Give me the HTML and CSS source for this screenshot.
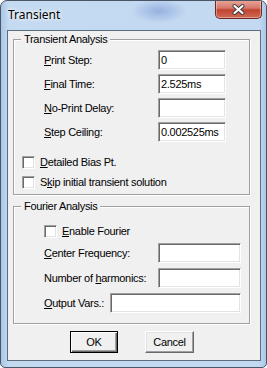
FILE: index.html
```html
<!DOCTYPE html>
<html lang="en">

<head>
	<meta charset="UTF-8">
	<title>Transient</title>
	<link rel="stylesheet" href="styles.css">
</head>

<body>
	<div class="window">
		<div class="titlebar">
			<span class="title">Transient</span>
			<button class="close" type="button">
				<svg width="13" height="11" viewBox="0 0 13 11">
					<path d="M2.5 2L10.5 9M10.5 2L2.5 9" stroke="#3a3a3a" stroke-width="4" stroke-linecap="round" />
					<path d="M2.5 2L10.5 9M10.5 2L2.5 9" stroke="#fff" stroke-width="2.2" stroke-linecap="round" />
				</svg>
			</button>
		</div>
		<div class="client">
			<fieldset class="group group-transient">
				<legend>Transient Analysis</legend>
				<div class="rows">
					<div class="field"><label><u>P</u>rint Step:</label><input class="edit" value="0"></div>
					<div class="field"><label><u>F</u>inal Time:</label><input class="edit" value="2.525ms"></div>
					<div class="field"><label><u>N</u>o-Print Delay:</label><input class="edit" value=""></div>
					<div class="field"><label><u>S</u>tep Ceiling:</label><input class="edit" value="0.002525ms"></div>
				</div>
				<div class="checks">
					<label class="check"><span class="box"></span><span><u>D</u>etailed Bias Pt.</span></label>
					<label class="check"><span class="box"></span><span>S<u>k</u>ip initial transient solution</span></label>
				</div>
			</fieldset>
			<fieldset class="group group-fourier">
				<legend>Fourier Analysis</legend>
				<div class="rows">
					<label class="check check-inset"><span class="box"></span><span><u>E</u>nable Fourier</span></label>
					<div class="field field-wide"><label><u>C</u>enter Frequency:</label><input class="edit" value=""></div>
					<div class="field field-wide"><label>Number of <u>h</u>armonics:</label><input class="edit" value=""></div>
					<div class="field field-vars"><label><u>O</u>utput Vars.:</label><input class="edit" value=""></div>
				</div>
			</fieldset>
			<div class="buttons">
				<button class="btn btn-default" type="button">OK</button>
				<button class="btn" type="button">Cancel</button>
			</div>
		</div>
	</div>
</body>

</html>
```

FILE: styles.css
```css
* {
	margin: 0;
	padding: 0;
	box-sizing: border-box;
}

body {
	background: #fff;
	font-family: "Liberation Sans", Arial, sans-serif;
	font-size: 11px;
	letter-spacing: -0.3px;
	color: #000;
}

.window {
	width: 267px;
	height: 368px;
	display: flex;
	flex-direction: column;
	border: 1px solid #4a5666;
	border-radius: 7px 7px 5px 5px;
	background:
		radial-gradient(ellipse 28px 12px at 158px 10px, rgba(70, 100, 190, 0.35), rgba(70, 100, 190, 0)),
		linear-gradient(to right, #a9c7e8, #c4daf1 8px, #c2d9f1 258px, #a9c7e8);
	overflow: hidden;
}

.titlebar {
	height: 29px;
	display: flex;
	align-items: flex-start;
	padding-left: 7px;
}

.title {
	margin-top: 6px;
	font-family: "Noto Sans", "Open Sans", sans-serif;
	font-size: 12px;
	line-height: 16px;
	letter-spacing: 0;
	text-shadow: 0 0 6px #fff, 0 0 3px #fff;
}

.close {
	margin-left: auto;
	margin-right: 4px;
	margin-top: -1px;
	width: 47px;
	height: 19px;
	display: flex;
	align-items: center;
	justify-content: center;
	border: 1px solid #6b2a22;
	border-top: 0;
	border-radius: 0 0 5px 5px;
	background: linear-gradient(to bottom, #e9a99c, #d5786a 45%, #c0432f 55%, #cf6b56);
	box-shadow: inset 0 0 0 1px rgba(255, 220, 210, 0.45);
}

.client {
	flex: 1;
	margin: 0 5px 6px 6px;
	border: 1px solid #5d6d80;
	background: #f0f0f0;
	display: flex;
	flex-direction: column;
}

.group {
	margin: 2px 10px 0 5px;
	border: 1px solid #a0a0a0;
	box-shadow: inset 1px 1px 0 #fff, 1px 1px 0 #fff;
	min-width: 0;
}

.group legend {
	margin-left: 7px;
	padding: 0 3px;
	line-height: 13px;
	background: #f0f0f0;
}

.group-fourier {
	margin-top: 5px;
}

.rows {
	display: flex;
	flex-direction: column;
	gap: 4px;
	padding-top: 4px;
}

.field {
	display: grid;
	grid-template-columns: 114px 68px;
	align-items: center;
	height: 20px;
	padding-left: 30px;
}

.field-wide {
	grid-template-columns: 114px 83px;
}

.field-vars {
	grid-template-columns: 66px 131px;
}

.edit {
	height: 20px;
	width: 100%;
	padding: 0 2px;
	font: inherit;
	letter-spacing: inherit;
	color: #000;
	background: #fff;
	border: 1px solid;
	border-color: #a0a0a0 #fff #fff #a0a0a0;
	box-shadow: inset 1px 1px 0 #696969, inset -1px -1px 0 #e3e3e3;
	outline: none;
}

.checks {
	display: flex;
	flex-direction: column;
	padding: 10px 0 2px 8px;
}

.check {
	display: flex;
	align-items: center;
	gap: 5px;
	height: 20px;
}

.check-inset {
	padding-left: 30px;
	margin-top: 4px;
	margin-bottom: -3px;
}

.group-fourier .rows {
	gap: 5px;
	padding-bottom: 10px;
}

.box {
	width: 13px;
	height: 13px;
	background: #fff;
	border: 1px solid;
	border-color: #a0a0a0 #fff #fff #a0a0a0;
	box-shadow: inset 1px 1px 0 #696969, inset -1px -1px 0 #e3e3e3;
}

.buttons {
	display: flex;
	gap: 27px;
	padding: 7px 0 0 62px;
}

.btn {
	width: 48px;
	height: 22px;
	font: inherit;
	letter-spacing: inherit;
	color: #000;
	background: #f0f0f0;
	border: 1px solid;
	border-color: #fff #696969 #696969 #fff;
	box-shadow: inset -1px -1px 0 #a0a0a0, inset 1px 1px 0 #e3e3e3;
}

.btn + .btn {
	width: 49px;
}

.btn-default {
	border-color: #000;
	box-shadow: inset 1px 1px 0 #fff, inset -1px -1px 0 #696969, inset -2px -2px 0 #a0a0a0;
}
```
